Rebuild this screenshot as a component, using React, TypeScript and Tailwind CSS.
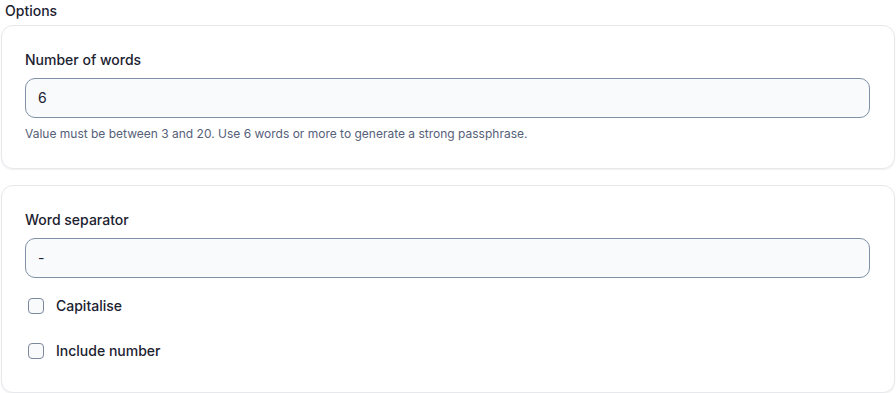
import React from "react";

function Checkbox({ label }: { label: string }) {
  return (
    <label className="flex h-5 items-center">
      <span className="ml-[3px] h-4 w-4 rounded-[4px] border border-[#7c889c] bg-[#f8fafc]" />
      <span className="ml-[12px] text-sm font-medium text-[#1c2230]">{label}</span>
    </label>
  );
}

export default function App() {
  return (
    <div className="min-h-[393px] w-[896px] bg-white px-px font-['Inter','Noto_Sans',sans-serif]">
      <div className="pl-[4px] pt-px text-sm font-medium leading-5 text-[#1c2230]">Options</div>
      <div className="mt-[4px] rounded-xl border border-[#e6e8ec] bg-white pl-[23px] pr-6 pb-[26px] pt-6 shadow-[0_1px_2px_rgba(0,0,0,0.06)]">
        <div className="text-sm font-medium leading-5 text-[#1c2230]">Number of words</div>
        <div className="mt-2 flex h-10 items-center rounded-[10px] border border-[#8090a6] bg-[#f8fafc] px-3 text-sm text-[#1c2230]">
          6
        </div>
        <div className="mt-2 text-xs leading-4 text-[#566079]">
          Value must be between 3 and 20. Use 6 words or more to generate a strong passphrase.
        </div>
      </div>
      <div className="mt-4 rounded-xl border border-[#e6e8ec] bg-white pl-[23px] pr-6 pb-[31px] pt-6 shadow-[0_1px_2px_rgba(0,0,0,0.06)]">
        <div className="text-sm font-medium leading-5 text-[#1c2230]">Word separator</div>
        <div className="mt-2 flex h-10 items-center rounded-[10px] border border-[#8090a6] bg-[#f8fafc] px-3 text-sm text-[#1c2230]">
          -
        </div>
        <div className="mt-[18px]">
          <Checkbox label="Capitalise" />
        </div>
        <div className="mt-[25px]">
          <Checkbox label="Include number" />
        </div>
      </div>
    </div>
  );
}
